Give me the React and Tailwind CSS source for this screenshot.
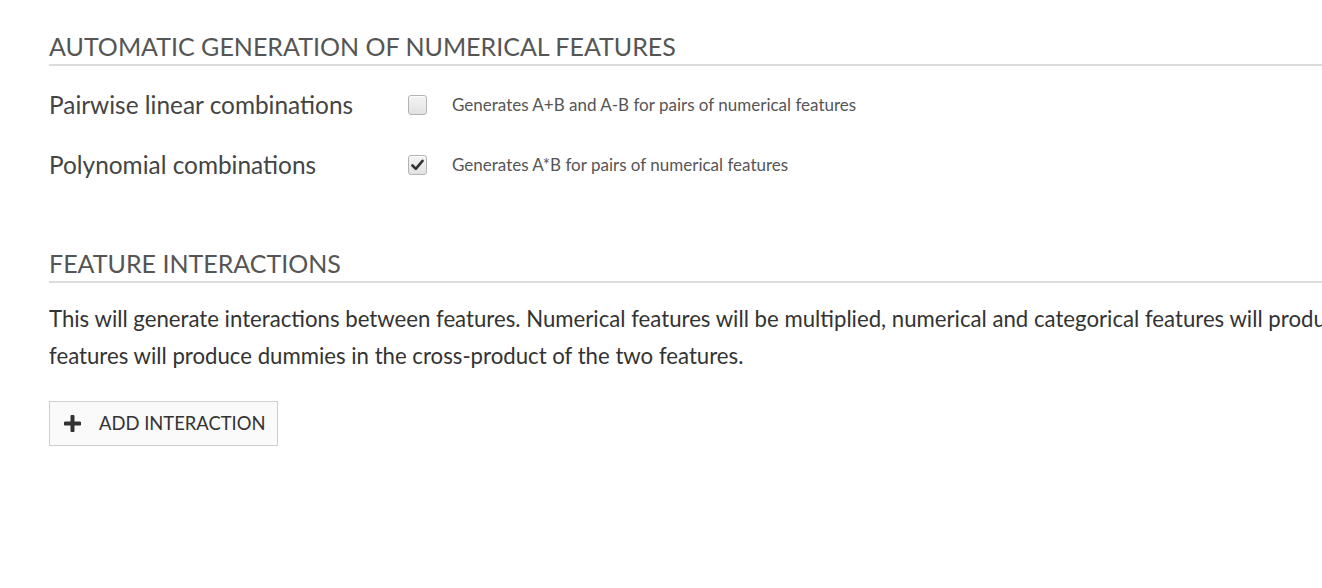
import React from "react";

const OPTIONS = [
  { label: "Pairwise linear combinations", help: "Generates A+B and A-B for pairs of numerical features", checked: false },
  { label: "Polynomial combinations", help: "Generates A*B for pairs of numerical features", checked: true },
];

function Checkbox({ checked }) {
  return (
    <span className="w-[19px] h-[20px] rounded-[3px] border border-[#b3b3b3] bg-gradient-to-b from-[#f4f4f4] to-[#e2e2e2] flex items-center justify-center shadow-[inset_0_1px_1px_rgba(255,255,255,0.8)]">
      {checked && (
        <svg width="13" height="12" viewBox="0 0 13 12">
          <path d="M1.5 6.5 L4.8 9.8 L11.5 1.8" fill="none" stroke="#333" strokeWidth="2.6" strokeLinecap="round" strokeLinejoin="round" />
        </svg>
      )}
    </span>
  );
}

function SectionTitle({ children }) {
  return (
    <h2 className="text-[25px] leading-[32px] text-[#555] uppercase border-b-2 border-[#dcdcdc] pb-[2px]">
      {children}
    </h2>
  );
}

export default function App() {
  return (
    <div className="w-[1322px] h-[588px] overflow-hidden bg-white font-['Lato',sans-serif]">
      <div className="w-[1700px] pl-[49px] pt-[30px]">
        <SectionTitle>Automatic generation of numerical features</SectionTitle>

        <div className="mt-[22px] space-y-[26px]">
          {OPTIONS.map((opt) => (
            <div key={opt.label} className="flex items-center h-[34px]">
              <span className="w-[359px] text-[24.4px] text-[#444]">{opt.label}</span>
              <Checkbox checked={opt.checked} />
              <span className="ml-[25px] text-[17px] text-[#555]">{opt.help}</span>
            </div>
          ))}
        </div>

        <div className="mt-[65px]">
          <SectionTitle>Feature interactions</SectionTitle>
          <p className="mt-[17px] text-[22.2px] leading-[37px] text-[#333] whitespace-nowrap">
            This will generate interactions between features. Numerical features will be multiplied, numerical and categorical features will produce one dummy per category, and two categorical
            <br />
            features will produce dummies in the cross-product of the two features.
          </p>
          <button className="mt-[27px] h-[45px] w-[229px] border border-[#cfcfcf] bg-[#fafafa] flex items-center pl-[14px] text-[18.4px] text-[#333] uppercase">
            <svg width="17" height="17" viewBox="0 0 17 17" className="mr-[18px]">
              <path d="M8.5 1.5 V15.5 M1.5 8.5 H15.5" stroke="#333" strokeWidth="4" strokeLinecap="round" />
            </svg>
            Add interaction
          </button>
        </div>
      </div>
    </div>
  );
}
